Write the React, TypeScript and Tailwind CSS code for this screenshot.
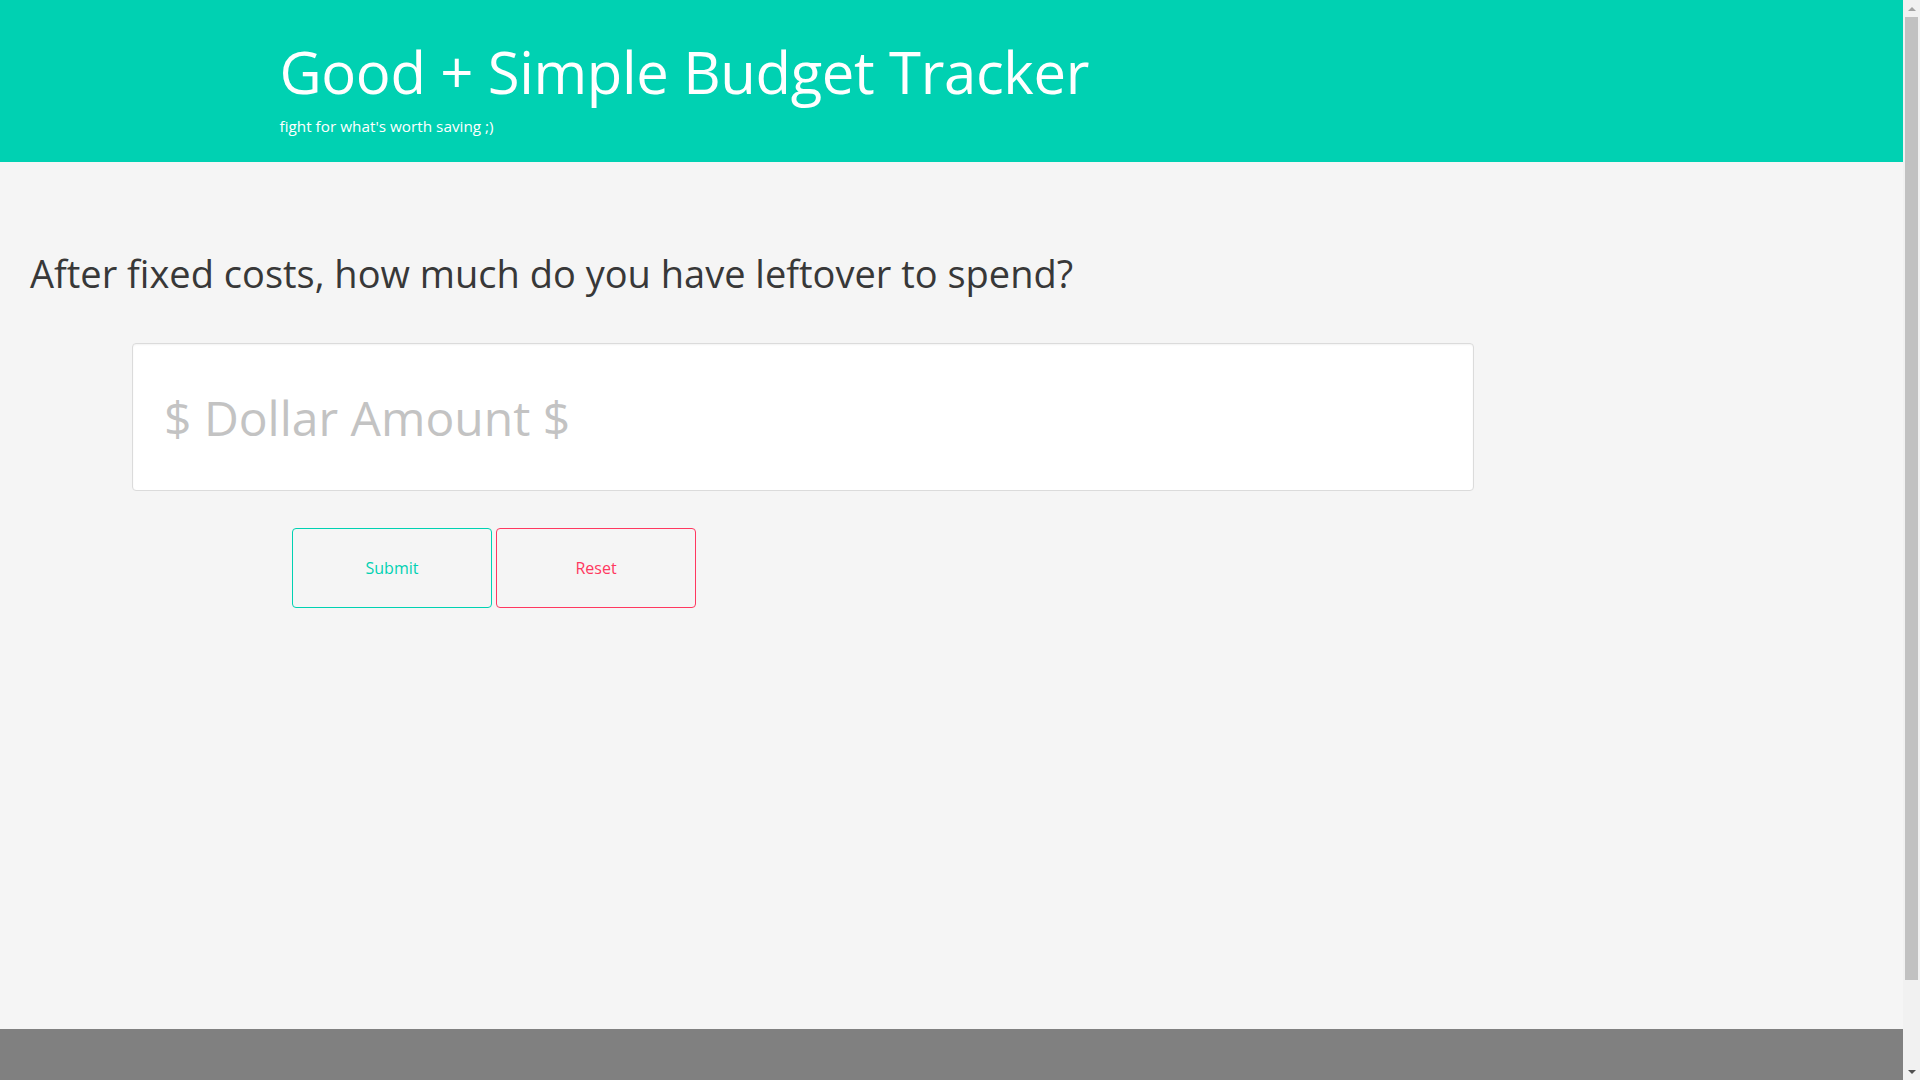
import { useState } from 'react';

export default function App() {
  const [amount, setAmount] = useState('');

  return (
    <div className="font-['Open_Sans','Noto_Sans',sans-serif] text-[#363636]">
      <div className="mr-[17px] flex min-h-screen flex-col bg-[#f5f5f5]">
        <header className="h-[162px] bg-[#00d1b2]">
          <div className="mx-auto w-[1344px] pt-[43px]">
            <h1 className="text-[58px] leading-none font-normal tracking-[-0.35px] text-white">Good + Simple Budget Tracker</h1>
            <p className="mt-[18px] text-[15.3px] leading-none text-white">fight for what's worth saving ;)</p>
          </div>
        </header>

        <main className="h-[867px]">
          <h2 className="pt-[81px] pl-[30px] text-[38px] leading-[60px] text-[#383838]">After fixed costs, how much do you have leftover to spend?</h2>

          <div className="mt-[40px] pl-[132px]">
            <input
              type="text"
              value={amount}
              onChange={(event) => setAmount(event.target.value)}
              placeholder="$ Dollar Amount $"
              className="h-[148px] w-[1342px] rounded-[4px] border border-[#dbdbdb] bg-white pl-[31px] text-[48px] text-[#363636] shadow-[inset_0_1px_2px_rgba(10,10,10,0.05)] outline-none placeholder:text-[#c3c3c3]"
            />
          </div>

          <div className="mt-[37px] flex gap-[4px] pl-[292px]">
            <button className="h-[80px] w-[200px] rounded-[4px] border border-[#00d1b2] bg-transparent text-base text-[#00d1b2]">Submit</button>
            <button onClick={() => setAmount('')} className="h-[80px] w-[200px] rounded-[4px] border border-[#ff3860] bg-transparent text-base text-[#ff3860]">
              Reset
            </button>
          </div>
        </main>

        <footer className="h-[144px] bg-[#808080]" />
      </div>

      {/* window scrollbar, as in the screenshot */}
      <div className="fixed top-0 right-0 flex h-screen w-[17px] flex-col items-center bg-[#f1f1f1]">
        <div className="flex h-[17px] items-center justify-center">
          <div className="h-0 w-0 border-x-[4px] border-b-[4px] border-x-transparent border-b-[#a3a3a3]" />
        </div>
        <div className="h-[963px] w-[13px] bg-[#c1c1c1]" />
        <div className="flex-1" />
        <div className="flex h-[17px] items-center justify-center">
          <div className="h-0 w-0 border-x-[4px] border-t-[4px] border-x-transparent border-t-[#505050]" />
        </div>
      </div>
    </div>
  );
}
